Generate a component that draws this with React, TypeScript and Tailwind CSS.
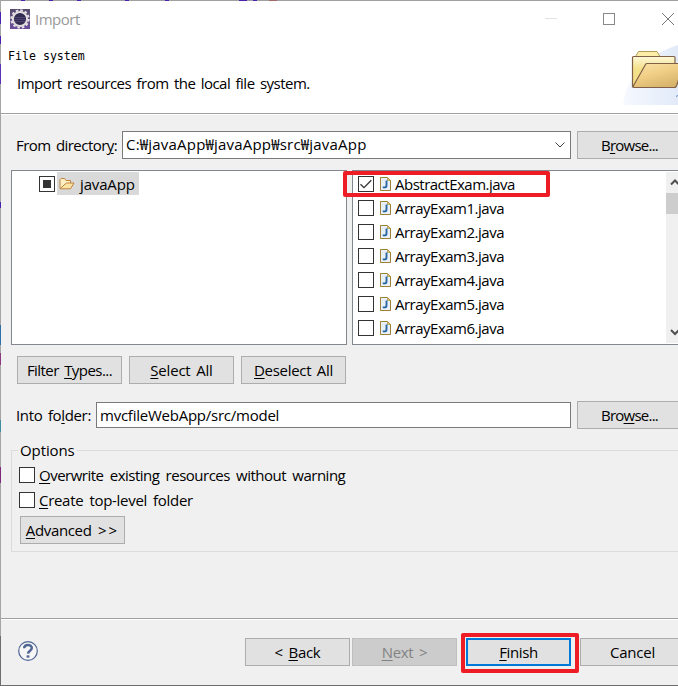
import { ReactNode } from "react";
import clsx from "clsx";

const files = [
  { name: "AbstractExam.java", checked: true },
  { name: "ArrayExam1.java", checked: false },
  { name: "ArrayExam2.java", checked: false },
  { name: "ArrayExam3.java", checked: false },
  { name: "ArrayExam4.java", checked: false },
  { name: "ArrayExam5.java", checked: false },
  { name: "ArrayExam6.java", checked: false },
];

// Underlined access key inside a label
function Key({ children }: { children: ReactNode }) {
  return <span className="underline decoration-1 underline-offset-2">{children}</span>;
}

interface ButtonProps {
  children: ReactNode;
  className?: string;
  variant?: "normal" | "primary" | "disabled";
}

function Button({ children, className, variant = "normal" }: ButtonProps) {
  return (
    <button
      disabled={variant === "disabled"}
      className={clsx(
        "flex h-7 w-[105px] shrink-0 items-center justify-center whitespace-pre",
        variant === "normal" && "border border-[#adadad] bg-[#e1e1e1]",
        variant === "primary" && "border-2 border-[#0078d7] bg-[#e1e1e1]",
        variant === "disabled" && "border border-[#bfbfbf] bg-[#cccccc] text-[#838383]",
        className
      )}
    >
      {children}
    </button>
  );
}

function Checkbox({ state = "off" }: { state?: "off" | "on" | "partial" }) {
  return (
    <span className="flex size-4 shrink-0 items-center justify-center border border-[#333] bg-white">
      {state === "partial" && <span className="size-2 bg-[#333]" />}
      {state === "on" && (
        <svg className="size-3.5" viewBox="0 0 14 14" fill="none" stroke="#333" strokeWidth="1.3">
          <path d="M1.5 7.3L5 10.7L12.3 3.3" />
        </svg>
      )}
    </span>
  );
}

function EclipseIcon() {
  return (
    <svg className="size-5 shrink-0" viewBox="0 0 20 20">
      <defs>
        <linearGradient id="tile" x1="0" y1="0" x2="0" y2="1">
          <stop offset="0" stopColor="#554b6b" />
          <stop offset="1" stopColor="#6b4c9a" />
        </linearGradient>
      </defs>
      <rect width="20" height="20" fill="url(#tile)" />
      <circle cx="10" cy="10" r="8.7" fill="none" stroke="#e4dfe6" strokeWidth="2" strokeDasharray="2.6 1.955" />
      <circle cx="10" cy="10" r="7.1" fill="#322b50" stroke="#e2dede" strokeWidth="2" />
      <path d="M5 8.5h10M4.5 10.5h11M5 12.5h10" stroke="#554b7d" strokeWidth="0.8" />
    </svg>
  );
}

function BannerIcon() {
  return (
    <svg className="h-[60px] w-[56px]" viewBox="0 0 56 60">
      <defs>
        <linearGradient id="glow" x1="0" y1="0" x2="1" y2="0">
          <stop offset="0" stopColor="#f6f9fe" />
          <stop offset="1" stopColor="#e2eaf9" />
        </linearGradient>
        <linearGradient id="back" x1="0" y1="0" x2="0" y2="1">
          <stop offset="0" stopColor="#fdf8d8" />
          <stop offset="0.4" stopColor="#f4e18b" />
          <stop offset="1" stopColor="#f0dc84" />
        </linearGradient>
        <linearGradient id="front" x1="0" y1="0" x2="0.6" y2="1">
          <stop offset="0" stopColor="#fbe5ab" />
          <stop offset="0.5" stopColor="#f0ce86" />
          <stop offset="1" stopColor="#d7b36b" />
        </linearGradient>
      </defs>
      <path d="M1 60C3 35 25 9 56 0V60Z" fill="url(#glow)" />
      <path d="M13.5 11.5L16.5 6.5H35L38 11.5Z" fill="#fbeea6" stroke="#b29c5c" />
      <path d="M10.5 12.5Q10.5 11.5 11.5 11.5H52Q53 11.5 53 12.5V42H10.5Z" fill="url(#back)" stroke="#806046" strokeWidth="1.2" />
      <path d="M11 41.5L23.5 19.5Q24 18.5 25 18.5H62L54.5 41Q54 42.5 52 42.5H12Z" fill="url(#front)" stroke="#806046" strokeWidth="1.2" />
      <path d="M54 51.5L56 50.5" stroke="#5c86c2" />
    </svg>
  );
}

function OpenFolderIcon() {
  return (
    <svg className="h-3.5 w-4 shrink-0" viewBox="0 0 16 14" fill="#fbe3a4" stroke="#bd8340" strokeLinejoin="round">
      <path d="M1 11.5V2.5L2 1.5H5.5L7 3.5H11.5V6" fill="#fff0c4" />
      <path d="M1 11.8L5 8L7.5 6H15L11.5 11.8Z" />
    </svg>
  );
}

function JavaFileIcon() {
  return (
    <svg className="h-[14px] w-[11px] shrink-0" viewBox="0 0 11 14">
      <path d="M0.5 0.5H7.5L10.5 3.5V13.5H0.5Z" fill="#e8f0fa" stroke="#9f8038" />
      <path d="M7.5 0.5V3.5H10.5Z" fill="#e4c982" stroke="#b08c3c" strokeWidth="0.7" />
      <path d="M6.5 3.5V8.4Q6.5 10.4 4.5 10.4H2.7" fill="none" stroke="#29679f" strokeWidth="1.9" />
    </svg>
  );
}

function TitleBar() {
  return (
    <div className="flex h-9 items-center pl-[9px] text-[#999]">
      <EclipseIcon />
      <span className="-mt-px ml-[5px] tracking-[-0.5px]">Import</span>
      <div className="ml-auto flex items-center">
        <span className="-mt-px mr-[46px] h-px w-3 bg-[#e3e3e3]" />
        <span className="mr-[47px] size-3 border border-[#888]" />
        <svg className="mr-1 size-3" viewBox="0 0 12 12" stroke="#777">
          <path d="M0 0L12 12M12 0L0 12" />
        </svg>
      </div>
    </div>
  );
}

function Chevron({ up = false }: { up?: boolean }) {
  return (
    <svg className="h-[21px] w-[17px]" viewBox="0 0 17 21" fill="none" stroke="#505050" strokeWidth="2">
      <path d={up ? "M5 12.5L9 8.5L13 12.5" : "M5 8L9 12L13 8"} />
    </svg>
  );
}

function FileList() {
  return (
    <div className="relative ml-[5px] flex w-[333px] shrink-0 border border-[#828790] bg-white">
      <ul className="flex-1 pt-px tracking-[-0.5px]">
        {files.map((file) => (
          <li key={file.name} className="flex h-6 items-center pl-[5px]">
            <Checkbox state={file.checked ? "on" : "off"} />
            <span className="ml-1.5 flex">
              <JavaFileIcon />
            </span>
            <span className="ml-1">{file.name}</span>
          </li>
        ))}
      </ul>
      <div className="my-px mr-px flex w-[17px] flex-col bg-[#f0f0f0]">
        <Chevron up />
        <span className="mb-auto h-[21px] bg-[#cdcdcd]" />
        <Chevron />
      </div>
      <span className="absolute -top-px -left-[10px] mt-px h-[26px] w-[207px] rounded-xs border-4 border-[#ee1c25]" />
    </div>
  );
}

export default function App() {
  return (
    <div className="flex h-[686px] w-[678px] overflow-hidden bg-[#f0f0f0] font-['Open_Sans','Noto_Sans_CJK_KR',sans-serif] text-[15px] leading-5 text-black">
      {/* Sliver of the editor behind the dialog */}
      <div className="flex w-px shrink-0 flex-col bg-[#a5a5a5]">
        <span className="mt-3 h-3 bg-[#4a22b0]" />
        <span className="mt-3 h-2 bg-[#4a22b0]" />
        <span className="mt-5 h-5 bg-[#5a32b8]" />
        <span className="mt-[118px] h-1.5 bg-[#4a22b0]" />
        <span className="mt-[117px] h-5 bg-[#2d6fa8]" />
        <span className="mt-2 h-3 bg-[#8b3a82]" />
        <span className="mt-[55px] h-3 bg-[#3f8c9c]" />
        <span className="mt-[35px] h-4 bg-[#7c2a78]" />
        <span className="mt-auto h-[50px] bg-[#6e6e6e]" />
      </div>
      <div className="flex min-w-0 flex-1 flex-col border-b border-[#6e6e6e]">
        <div className="flex h-px shrink-0 bg-[#a0a0a0]">
          <span className="ml-5 w-1 bg-[#4a22b0]" />
          <span className="ml-6 w-1 bg-[#4a22b0]" />
          <span className="ml-6 w-1 bg-[#4a22b0]" />
          <span className="ml-11 w-1 bg-[#4a22b0]" />
          <span className="ml-9 w-1 bg-[#4a22b0]" />
          <span className="ml-[70px] w-2 bg-[#4a22b0]" />
          <span className="ml-1.5 w-1 bg-[#4a22b0]" />
          <span className="ml-3 w-2 bg-[#a06868]" />
        </div>
        <header className="flex h-[113px] shrink-0 flex-col border-b border-[#a0a0a0] bg-white">
          <TitleBar />
          <div className="flex justify-between">
            <div>
              <h1 className="mt-[11px] pl-[7px] font-['DejaVu_Sans_Mono',monospace] text-[11.6px] leading-4">File system</h1>
              <p className="mt-[9px] pl-4 tracking-[-0.52px] whitespace-pre [word-spacing:2px]">Import resources from the local file system.</p>
            </div>
            <div className="mt-2">
              <BannerIcon />
            </div>
          </div>
        </header>

        <main className="flex h-[504px] shrink-0 flex-col border-t border-white">
          <div className="mt-4 flex h-7 items-center">
            <label className="w-[121px] shrink-0 pl-[15px] tracking-[-0.55px] whitespace-nowrap [word-spacing:2px]">
              From director<Key>y</Key>:
            </label>
            <div className="flex h-7 w-[449px] shrink-0 items-center justify-between border border-[#7a7a7a] bg-white pr-1 pl-[3px]">
              <span className="-mt-0.5 tracking-[0.2px]">C:₩javaApp₩javaApp₩src₩javaApp</span>
              <svg className="h-2 w-3" viewBox="0 0 12 8" fill="none" stroke="#444">
                <path d="M1.5 1.5L6 6L10.5 1.5" />
              </svg>
            </div>
            <Button className="ml-1.5 tracking-[-0.75px]">B<Key>r</Key>owse...</Button>
          </div>

          <div className="mt-[11px] flex h-[175px] pl-2.5">
            <div className="w-[336px] shrink-0 border border-[#828790] bg-white pt-px pl-[27px]">
              <div className="flex h-[23px] items-center">
                <Checkbox state="partial" />
                <span className="ml-0.5 flex h-[23px] w-[82px] items-center bg-[#d9d9d9] pl-0.5">
                  <OpenFolderIcon />
                  <span className="ml-[5px] tracking-[-0.15px]">javaApp</span>
                </span>
              </div>
            </div>
            <FileList />
          </div>

          <div className="mt-[11px] flex gap-[7px] pl-4">
            <Button className="tracking-[-0.55px] [word-spacing:2px]">Filter <Key>T</Key>ypes...</Button>
            <Button className="tracking-[-0.2px] [word-spacing:2px]"><Key>S</Key>elect All</Button>
            <Button className="tracking-[-0.3px] [word-spacing:2px]"><Key>D</Key>eselect All</Button>
          </div>

          <div className="mt-[17px] flex h-7 items-center">
            <label className="w-[95px] shrink-0 pl-[15px] tracking-[-0.35px] whitespace-nowrap [word-spacing:2px]">
              Into fo<Key>l</Key>der:
            </label>
            <div className="flex h-[26px] w-[475px] shrink-0 items-center border border-[#7a7a7a] bg-white pl-[3px] tracking-[-0.24px]">mvcfileWebApp/src/model</div>
            <Button className="ml-1.5 tracking-[-0.75px]">Bro<Key>w</Key>se...</Button>
          </div>

          <fieldset className="mt-[11px] ml-2.5 h-[112px] w-[690px] border border-[#dcdcdc] pl-[7px]">
            <legend className="-ml-px px-0.5 leading-5 tracking-[-0.1px]">Options</legend>
            <label className="mt-[5px] flex h-5 items-center gap-1">
              <Checkbox />
              <span className="tracking-[-0.5px] [word-spacing:2.8px]"><Key>O</Key>verwrite existing resources without warning</span>
            </label>
            <label className="mt-[5px] flex h-5 items-center gap-1">
              <Checkbox />
              <span className="tracking-[-0.3px] [word-spacing:2.5px]"><Key>C</Key>reate top-level folder</span>
            </label>
            <Button className="mt-1.5 ml-px tracking-[-0.35px] [word-spacing:3px]">
              <span><Key>A</Key>dvanced <span className="tracking-[2px]">&gt;&gt;</span></span>
            </Button>
          </fieldset>
        </main>

        <footer className="flex flex-1 items-center border-t border-[#a0a0a0] shadow-[inset_0_1px_0_#fff]">
          <svg className="-mt-0.5 ml-[17px] size-5 shrink-0" viewBox="0 0 20 20" fill="none" stroke="#506694">
            <circle cx="10" cy="10" r="9.3" fill="#f6f6f6" strokeWidth="1.2" />
            <path d="M6.2 7.3C6.2 3 13.8 3 13.8 7.1C13.8 9.7 10.3 9.6 10 12.6" strokeWidth="2.5" />
            <path d="M8.6 15.5h2.8" strokeWidth="2.3" />
          </svg>
          <div className="ml-[207px] flex items-center">
            <Button className="tracking-[-0.3px] [word-spacing:2px]">&lt; <Key>B</Key>ack</Button>
            <Button className="ml-0.5 tracking-[-0.3px] [word-spacing:2px]" variant="disabled"><Key>N</Key>ext &gt;</Button>
            <div className="relative ml-[9px]">
              <Button className="tracking-[-0.4px]" variant="primary"><Key>F</Key>inish</Button>
              <span className="absolute -top-[5px] -left-[5px] h-10 w-[118px] rounded-xs border-4 border-[#ee1c25]" />
            </div>
            <Button className="ml-[9px] tracking-[-0.2px]">Cancel</Button>
          </div>
        </footer>
      </div>
    </div>
  );
}
